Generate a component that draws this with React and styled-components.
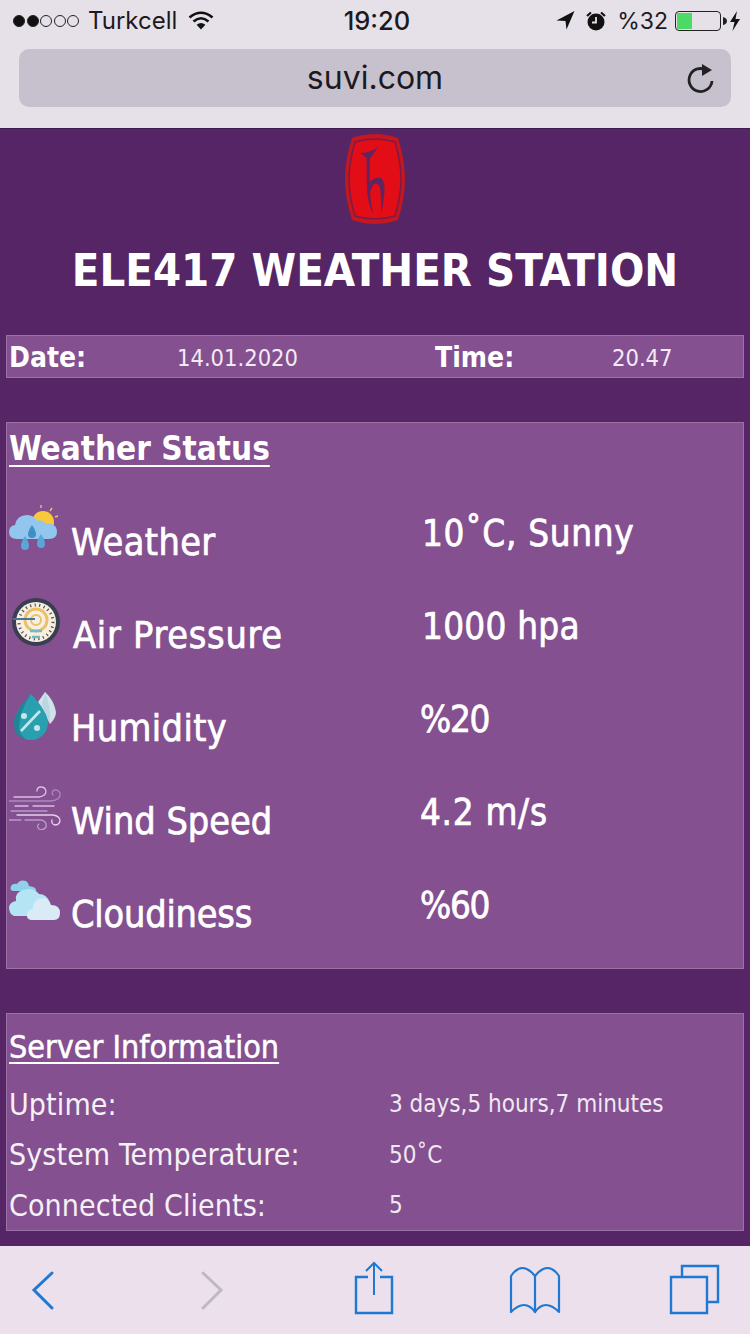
import React from 'react';
import styled, { createGlobalStyle } from 'styled-components';

const Global = createGlobalStyle`
  html, body { margin: 0; padding: 0; background: #552565; }
  * { box-sizing: border-box; }
`;
const Page = styled.div`
  width: 750px; height: 1334px; display: flex; flex-direction: column; overflow: hidden;
  font-family: "DejaVu Sans", sans-serif; font-stretch: condensed; color: #fff;
`;
const Chrome = styled.header`
  height: 129px; flex: none; background: #e6e1e9; color: #1c1a1f; font-stretch: normal;
  font-family: "Inter", "Liberation Sans", sans-serif; border-bottom: 1px solid #3f1b50;
`;
const StatusBar = styled.div`
  height: 49px; display: grid; grid-template-columns: 1fr auto 1fr; align-items: center; padding: 0 9px 8px 13px; font-size: 24px;
`;
const StatusSide = styled.div`
  display: flex; align-items: center; gap: ${p => p.$gap || 8}px; justify-content: ${p => p.$end ? 'flex-end' : 'flex-start'};
`;
const Time = styled.span`font-weight: 500; font-size: 25.5px;`;
const Dots = styled.span`display: flex; gap: 1.5px; margin-right: 1px;`;
const Dot = styled.i`
  width: 12px; height: 12px; border-radius: 50%; border: 1px solid #222;
  background: ${p => p.$on ? '#111' : 'transparent'};
`;
const Carrier = styled.span`margin-right: 3px;`;
const Percent = styled.span`font-size: 23px;`;
const Battery = styled.span`
  width: 46px; height: 20px; border: 1.5px solid #222; border-radius: 4px; padding: 1px; display: block; margin-left: -3px;
`;
const Charge = styled.span`display: block; height: 100%; width: 15px; background: #4cd964;`;
const UrlBar = styled.div`
  margin: 0 19px; height: 58px; border-radius: 10px; background: #c7c1ce; position: relative;
  display: flex; align-items: center; justify-content: center; font-size: 32px; font-weight: 400; padding-bottom: 2px;
`;
const Reload = styled.svg`position: absolute; right: 15px; top: 12px;`;
const Main = styled.main`
  flex: 1; background: #552565; padding: 0 6px; display: flex; flex-direction: column; min-height: 0;
`;
const Brand = styled.div`display: flex; flex-direction: column; align-items: center; padding-top: 5px; height: 206px;`;
const Title = styled.h1`
  margin: 17px 0 0; font-size: 45px; line-height: 60px; font-weight: 700; white-space: nowrap;
`;
const Panel = styled.section`
  background: #845090; border: 1px solid #9a72a5; margin-bottom: ${p => p.$mb || 0}px;
`;
const DateBar = styled(Panel)`
  height: 43px; display: grid; grid-template-columns: 168px 258px 177px 1fr; align-items: center; padding: 2px 0 0 2px;
`;
const DateLabel = styled.span`font-size: 28px; font-weight: 700;`;
const DateValue = styled.span`font-size: 23.5px; color: #f2ebf4;`;
const Weather = styled(Panel)`height: 547px; padding: 4px 3px 0 2px;`;
const Heading = styled.h2`
  margin: 0; font-size: 33px; line-height: 44px; font-weight: 700; text-decoration: underline; text-decoration-thickness: 2px; text-underline-offset: 5px;
`;
const Rows = styled.div`display: flex; flex-direction: column; margin-top: 29px;`;
const Row = styled.div`
  height: 93px; display: grid; grid-template-columns: 413px 1fr; align-items: start;
`;
const LabelCell = styled.div`display: flex; align-items: flex-start;`;
const IconBox = styled.div`width: ${p => p.$w || 62}px; height: 62px; flex: none;`;
const Label = styled.span`
  font-size: 37.5px; line-height: 44px; margin-top: 20px; white-space: nowrap; font-weight: 400;
  letter-spacing: ${p => p.$track}px; -webkit-text-stroke: 0.7px #fff;
`;
const Value = styled.span`
  font-size: 36.5px; line-height: 44px; margin-top: 12px; margin-left: ${p => p.$shift || 0}px; white-space: nowrap;
  letter-spacing: ${p => p.$track}px; -webkit-text-stroke: 0.7px #fff;
`;
const Server = styled(Panel)`height: 218px; padding: 12px 2px 0;`;
const ServerHeading = styled.h3`
  margin: 0 0 11px; font-size: 32px; line-height: 42px; font-weight: 400; -webkit-text-stroke: 0.5px #fff; text-decoration: underline; text-decoration-thickness: 2px; text-underline-offset: 4px;
`;
const ServerRow = styled.div`
  height: 50.5px; display: grid; grid-template-columns: 380px 1fr; align-items: center;
`;
const ServerLabel = styled.span`font-size: 30px; letter-spacing: 0.1px; color: #f6f0f7;`;
const ServerValue = styled.span`font-size: 24px; color: #f0e9f2;`;
const Toolbar = styled.nav`
  flex: none; height: 88px; background: #ebe0ec; display: block;
`;
const Spacer = styled.div`height: ${p => p.$h}px; flex: none;`;

const Logo = () => (
  <svg width="60" height="90" viewBox="0 0 60 90" style={{ flex: 'none' }}>
    <path d="M7 4 Q30 -4 53 4 Q60 26 60 45 Q60 64 53 86 Q30 94 7 86 Q0 64 0 45 Q0 26 7 4Z" fill="#c4171f" />
    <path d="M10 8 Q30 2 50 8 Q56 28 56 45 Q56 62 50 82 Q30 88 10 82 Q4 62 4 45 Q4 28 10 8Z" fill="#e30d17" stroke="#7a1c4a" strokeWidth="1.5" />
    <path d="M15 19 Q25 19 33 13 Q28 21 25 24 L24.5 48 Q31 42 36 44 Q40 48 39.5 58 Q38.5 70 36 80 Q36.5 64 35 54 Q33 48 29 50 Q26 53 25 60 Q26 70 28 80 Q23.5 72 22 56 L21.5 24 Q18 21 15 19Z" fill="#5e2560" />
  </svg>
);
const Signal = () => <Dots>{[1,1,0,0,0].map((on,i) => <Dot key={i} $on={!!on} />)}</Dots>;
const Wifi = () => (
  <svg width="26" height="20" viewBox="0 0 26 20" fill="none" stroke="#111" strokeWidth="2.6">
    <path d="M1.5 6.5 Q13 -3 24.5 6.5" /><path d="M5.5 10.5 Q13 4 20.5 10.5" />
    <path d="M13 18.5 L8.6 13.8 Q13 10 17.4 13.8Z" fill="#111" stroke="none" />
  </svg>
);
const Arrow = () => (
  <svg width="19" height="19" viewBox="0 0 18 19"><path d="M0 9.5 L18 0 L10 18.5 L9 10Z" fill="#111" /></svg>
);
const Alarm = () => (
  <svg width="22" height="20" viewBox="0 0 22 20">
    <circle cx="11" cy="11" r="8.5" fill="#111" />
    <path d="M11 6 V11.5 H7" stroke="#e6e1e9" strokeWidth="1.8" fill="none" />
    <path d="M2 5 L6 1.5 M20 5 L16 1.5" stroke="#111" strokeWidth="2.2" />
  </svg>
);
const Bolt = () => (
  <svg width="12" height="20" viewBox="0 0 12 20" style={{ marginLeft: -8 }}><path d="M8 0 L1 11 H5.5 L3.5 20 L11 8 H6.5Z" fill="#111" /></svg>
);
const Nub = () => <svg width="4" height="8" viewBox="0 0 4 8" style={{ marginLeft: -8 }}><path d="M0 0 Q4 1 4 4 Q4 7 0 8Z" fill="#222" /></svg>;

const WeatherIcon = () => (
  <svg width="50" height="50" viewBox="0 0 50 50" style={{ marginTop: 5 }}>
    <circle cx="34" cy="17" r="11" fill="#f8c93a" />
    <path d="M32 0 V3 M43 3 L41 6 M49 11 L46 12" stroke="#e6c27a" strokeWidth="1.4" />
    <path d="M8 34 Q0 34 0 27 Q0 21 6 20 Q8 10 18 10 Q25 10 28 16 Q33 14 36 18 Q48 18 48 27 Q48 34 40 34Z" fill="#92c6ee" />
    <path d="M23 20 Q27 26 27 29 A4 4 0 0 1 19 29 Q19 26 23 20Z" fill="#3f8ec4" />
    <path d="M16 31 Q20 37 20 41 A4 4 0 0 1 12 41 Q12 37 16 31Z M32 29 Q36 35 36 39 A4 4 0 0 1 28 39 Q28 35 32 29Z" fill="#5aa6d8" />
  </svg>
);
const GaugeIcon = () => (
  <svg width="50" height="50" viewBox="0 0 50 50" style={{ marginTop: 4, marginLeft: 2 }}>
    <circle cx="25" cy="25" r="24" fill="#3b3d52" />
    <circle cx="25" cy="25" r="20" fill="#f7f0e2" />
    <circle cx="25" cy="25" r="17" fill="none" stroke="#5a4f50" strokeWidth="3" strokeDasharray="1.2 3.4" />
    <circle cx="25" cy="23" r="11" fill="none" stroke="#ecc068" strokeWidth="3" />
    <circle cx="25" cy="23" r="5" fill="none" stroke="#ecc068" strokeWidth="2" />
    <path d="M2 22 H24" stroke="#44749a" strokeWidth="2" />
    <path d="M19 34 H31 M21 40 H29" stroke="#6fbcc4" strokeWidth="2.5" />
  </svg>
);
const HumidityIcon = () => (
  <svg width="48" height="52" viewBox="0 0 48 52" style={{ marginTop: 4 }}>
    <path d="M36 2 L29 12 L41 34 Q47 28 47 22 Q45 10 36 2Z" fill="#cfe3ea" />
    <path d="M36 2 L33 14 L41 34 Q42 16 36 2Z" fill="#b9d6e2" />
    <path d="M22 4 Q39 22 39 33 A17 17 0 0 1 5 33 Q5 22 22 4Z" fill="#2a9fb0" />
    <path d="M22 4 Q10 22 10 37 Q10 45 17 49 Q5 47 5 33 Q5 22 22 4Z" fill="#1f8494" />
    <path d="M12 41 L31 21" stroke="#c3e8ea" strokeWidth="2.6" />
    <circle cx="15" cy="26" r="3" fill="#c3e8ea" /><circle cx="28" cy="38" r="3" fill="#c3e8ea" />
  </svg>
);
const WindIcon = () => (
  <svg width="52" height="44" viewBox="0 0 52 44" fill="none" strokeWidth="1.3" strokeLinecap="round" style={{ marginTop: 7 }}>
    <path d="M5 11 H30 Q37 10 37 5 Q36 1 32 1 Q28 1 28 5" stroke="#d9bde3" />
    <path d="M0 15 H42 Q52 14 51 7 Q49 3 45 4 Q42 6 44 9" stroke="#a989c0" />
    <path d="M6 20 H19 M24 20 H45" stroke="#d9bde3" />
    <path d="M2 25 H38" stroke="#b69bcb" />
    <path d="M8 29 H44 Q51 30 51 35 Q50 39 46 39 Q42 38 43 34" stroke="#e6d0ec" />
    <path d="M0 34 H12 M16 34 H32 Q38 35 37 41 Q34 45 30 43 Q27 40 30 38" stroke="#b69bcb" />
  </svg>
);
const CloudIcon = () => (
  <svg width="52" height="42" viewBox="0 0 52 42" style={{ marginTop: 7 }}>
    <path d="M5 12 Q0 12 2 7 Q4 4 8 5 Q11 0 17 2 Q20 4 20 7 Q28 8 27 12Z" fill="#8fd0ea" />
    <path d="M5 37 Q0 35 0 28 Q1 23 7 22 Q5 14 14 11 Q24 8 30 15 Q38 15 41 24 Q40 33 30 37Z" fill="#b5e4f4" />
    <path d="M22 41 Q17 40 18 35 Q19 30 24 30 Q24 20 33 19 Q40 19 42 26 Q51 26 51 34 Q51 41 45 41Z" fill="#d9ecf5" />
  </svg>
);

const ToolIcons = () => (
  <svg width="750" height="88" viewBox="0 0 750 88" fill="none" style={{ display: 'block' }}>
    <path d="M52 27 L34 44 L52 62" stroke="#1f78d1" strokeWidth="3" strokeLinecap="round" />
    <path d="M203 27 L221 44 L203 62" stroke="#bdb9c0" strokeWidth="3" strokeLinecap="round" />
    <path d="M368 31 H356 V67 H392 V31 H380" stroke="#1f78d1" strokeWidth="2.4" />
    <path d="M374 17 V49 M366 25 L374 17 L382 25" stroke="#1f78d1" strokeWidth="2" />
    <path d="M535 66 Q525 52 511 66 V30 Q522 14 535 30 Q548 14 559 30 V66 Q545 52 535 66 Z M535 30 V66" stroke="#1f78d1" strokeWidth="2.2" strokeLinejoin="round" />
    <path d="M671 31 H707 V67 H671Z" stroke="#1f78d1" strokeWidth="2.4" />
    <path d="M682 31 V20 H718 V56 H707" stroke="#1f78d1" strokeWidth="2.4" />
  </svg>
);

const rows = [
  { label: 'Weather', value: '10\u02DAC, Sunny', icon: <WeatherIcon />, shift: 0, w: 62, lt: 0.4, vt: 0.7 },
  { label: 'Air Pressure', value: '1000 hpa', icon: <GaugeIcon />, shift: 0, w: 64, lt: 0.75, vt: 0.25 },
  { label: 'Humidity', value: '%20', icon: <HumidityIcon />, shift: -2, w: 62, lt: 0.4, vt: -1.3 },
  { label: 'Wind Speed', value: '4.2 m/s', icon: <WindIcon />, shift: -2, w: 62, lt: 0, vt: 0.7 },
  { label: 'Cloudiness', value: '%60', icon: <CloudIcon />, shift: -2, w: 62, lt: -0.2, vt: -1.3 },
];
const server = [
  ['Uptime:', '3 days,5 hours,7 minutes'],
  ['System Temperature:', '50\u02DAC'],
  ['Connected Clients:', '5'],
];

export default function App() {
  return (
    <Page>
      <Global />
      <Chrome>
        <StatusBar>
          <StatusSide><Signal /><Carrier>Turkcell</Carrier><Wifi /></StatusSide>
          <Time>19:20</Time>
          <StatusSide $end $gap={10}><Arrow /><Alarm /><Percent>%32</Percent><Battery><Charge /></Battery><Nub /><Bolt /></StatusSide>
        </StatusBar>
        <UrlBar>
          suvi.com
          <Reload width="30" height="34" viewBox="0 0 30 34" fill="none">
            <path d="M21 9.5 A11.5 11.5 0 1 0 26 20" stroke="#222" strokeWidth="2.8" />
            <path d="M16 3 L26 9 L16 15Z" fill="#222" />
          </Reload>
        </UrlBar>
      </Chrome>
      <Main>
        <Brand>
          <Logo />
          <Title>ELE417 WEATHER STATION</Title>
        </Brand>
        <DateBar $mb={44}>
          <DateLabel>Date:</DateLabel>
          <DateValue>14.01.2020</DateValue>
          <DateLabel>Time:</DateLabel>
          <DateValue>20.47</DateValue>
        </DateBar>
        <Weather>
          <Heading>Weather Status</Heading>
          <Rows>
            {rows.map(r => (
              <Row key={r.label}>
                <LabelCell>
                  <IconBox $w={r.w}>{r.icon}</IconBox>
                  <Label $track={r.lt}>{r.label}</Label>
                </LabelCell>
                <Value $shift={r.shift} $track={r.vt}>{r.value}</Value>
              </Row>
            ))}
          </Rows>
        </Weather>
        <Spacer $h={44} />
        <Server>
          <ServerHeading>Server Information</ServerHeading>
          {server.map(([l, v]) => (
            <ServerRow key={l}><ServerLabel>{l}</ServerLabel><ServerValue>{v}</ServerValue></ServerRow>
          ))}
        </Server>
      </Main>
      <Toolbar><ToolIcons /></Toolbar>
    </Page>
  );
}
